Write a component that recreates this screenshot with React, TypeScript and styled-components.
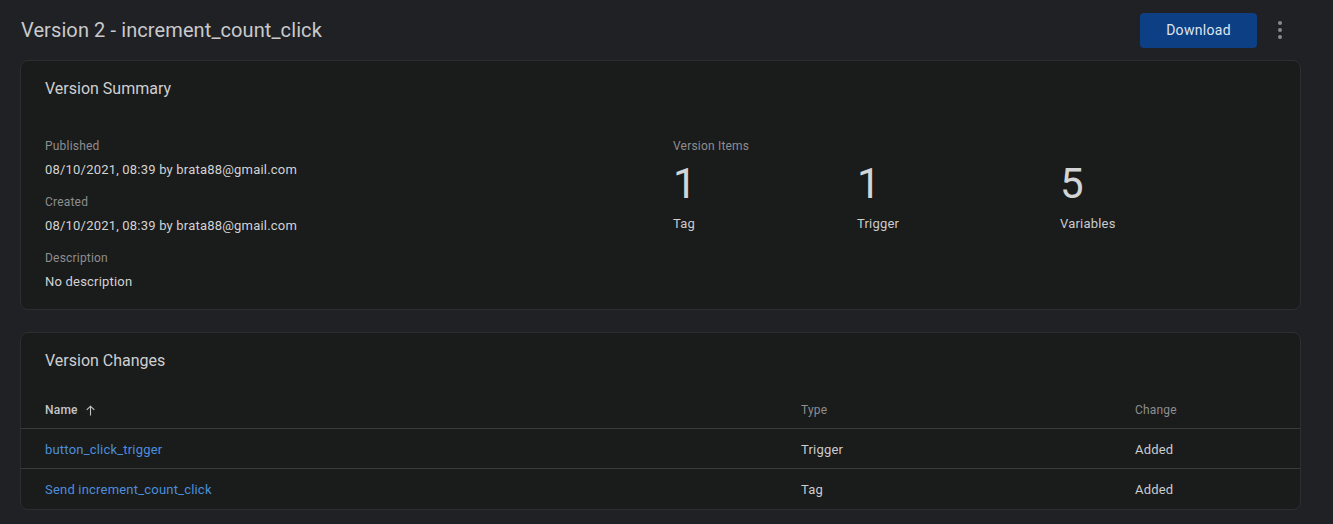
import React from "react";
import styled, { createGlobalStyle } from "styled-components";

const Global = createGlobalStyle`
  html, body { margin: 0; padding: 0; background: #202124; }
  body { font-family: Roboto, "Liberation Sans", sans-serif; color: #e3e3e3; }
  * { box-sizing: border-box; }
`;

const Page = styled.div`
  width: 1333px;
  height: 524px;
  background: #202124;
  padding: 0 45px 0 20px;
  overflow: hidden;
`;

const Header = styled.div`
  width: 1268px;
  height: 60px;
  display: flex;
  align-items: center;
  padding-left: 1px;
  padding-bottom: 1px;
`;

const Title = styled.h1`
  margin: 0;
  flex: 1;
  font-family: Roboto, "Open Sans", sans-serif;
  font-weight: 400;
  font-size: 20px;
  color: #c9cacc;
  letter-spacing: 0.1px;
`;

const DownloadButton = styled.button`
  width: 117px;
  height: 35px;
  margin-top: 1px;
  border: none;
  border-radius: 4px;
  background: #0d3f85;
  color: #dfe5ee;
  font-family: Roboto, sans-serif;
  font-size: 14px;
  font-weight: 400;
  letter-spacing: 0.3px;
  margin-right: 15px;
`;

const Kebab = styled.div`
  width: 16px;
  display: flex;
  flex-direction: column;
  align-items: center;
  gap: 3px;
  margin-top: 1px;
  span {
    width: 4px;
    height: 4px;
    border-radius: 50%;
    background: #8a8b8d;
  }
`;

const Card = styled.section<{ $h: number }>`
  width: 1281px;
  height: ${(p) => p.$h}px;
  background: #1a1b1b;
  border: 1px solid #2d2e30;
  border-radius: 8px;
`;

const CardTitle = styled.h2`
  margin: 0;
  height: 55px;
  display: flex;
  align-items: center;
  padding-left: 24px;
  font-size: 16px;
  font-weight: 400;
  color: #cfcfd1;
`;

const SummaryBody = styled.div`
  display: grid;
  grid-template-columns: 628px 1fr;
  padding: 21px 24px 0 24px;
`;

const Field = styled.div`
  margin-bottom: 13px;
`;

const Label = styled.div`
  font-size: 12px;
  line-height: 18px;
  color: #8d8e90;
  letter-spacing: 0.2px;
`;

const Value = styled.div`
  font-size: 13px;
  line-height: 20px;
  margin-top: 5px;
  color: #d2d3d4;
  letter-spacing: 0.2px;
`;

const Items = styled.div`
  display: grid;
  grid-template-columns: 184px 203px auto;
  margin-top: 2px;
`;

const Count = styled.div`
  font-size: 42px;
  line-height: 46px;
  color: #d3d4d5;
  margin-top: 4px;
`;

const CountLabel = styled.div`
  font-size: 13px;
  line-height: 20px;
  color: #cbcccd;
  margin-top: 7px;
  letter-spacing: 0.2px;
`;

const Gap = styled.div`
  height: 22px;
`;

const Table = styled.div`
  display: flex;
  flex-direction: column;
`;

const Row = styled.div<{ $head?: boolean; $last?: boolean }>`
  display: grid;
  grid-template-columns: 756px 334px 1fr;
  align-items: center;
  height: ${(p) => (p.$head ? 41 : 40)}px;
  padding: ${(p) => (p.$head ? "4px 24px 0" : "1px 24px 0")};
  border-bottom: 1px solid ${(p) => (p.$last ? "transparent" : "#3a3b3d")};
`;

const HeadCell = styled.div<{ $strong?: boolean }>`
  font-size: 12px;
  font-weight: ${(p) => (p.$strong ? 500 : 400)};
  color: ${(p) => (p.$strong ? "#c4c5c7" : "#8d8e90")};
  display: flex;
  align-items: center;
  gap: 6px;
  letter-spacing: 0.2px;
`;

const Cell = styled.div<{ $link?: boolean }>`
  font-size: 13px;
  color: ${(p) => (p.$link ? "#4b8fdc" : "#cbcccd")};
  letter-spacing: 0.2px;
`;

const ArrowUp = () => (
  <svg width="13" height="13" viewBox="0 0 24 24" fill="none" stroke="#c4c5c7" strokeWidth="2">
    <path d="M12 21V4M5 11l7-7 7 7" />
  </svg>
);

export default function App() {
  return (
    <>
      <Global />
      <Page>
        <Header>
          <Title>Version 2 - increment_count_click</Title>
          <DownloadButton>Download</DownloadButton>
          <Kebab>
            <span />
            <span />
            <span />
          </Kebab>
        </Header>
        <Card $h={250}>
          <CardTitle>Version Summary</CardTitle>
          <SummaryBody>
            <div>
              <Field>
                <Label>Published</Label>
                <Value>08/10/2021, 08:39 by brata88@gmail.com</Value>
              </Field>
              <Field>
                <Label>Created</Label>
                <Value>08/10/2021, 08:39 by brata88@gmail.com</Value>
              </Field>
              <Field>
                <Label>Description</Label>
                <Value>No description</Value>
              </Field>
            </div>
            <div>
              <Label>Version Items</Label>
              <Items>
                <div>
                  <Count>1</Count>
                  <CountLabel>Tag</CountLabel>
                </div>
                <div>
                  <Count>1</Count>
                  <CountLabel>Trigger</CountLabel>
                </div>
                <div>
                  <Count>5</Count>
                  <CountLabel>Variables</CountLabel>
                </div>
              </Items>
            </div>
          </SummaryBody>
        </Card>
        <Gap />
        <Card $h={178}>
          <CardTitle>Version Changes</CardTitle>
          <Table>
            <Row $head>
              <HeadCell $strong>
                Name <ArrowUp />
              </HeadCell>
              <HeadCell>Type</HeadCell>
              <HeadCell>Change</HeadCell>
            </Row>
            <Row>
              <Cell $link>button_click_trigger</Cell>
              <Cell>Trigger</Cell>
              <Cell>Added</Cell>
            </Row>
            <Row $last>
              <Cell $link>Send increment_count_click</Cell>
              <Cell>Tag</Cell>
              <Cell>Added</Cell>
            </Row>
          </Table>
        </Card>
      </Page>
    </>
  );
}
